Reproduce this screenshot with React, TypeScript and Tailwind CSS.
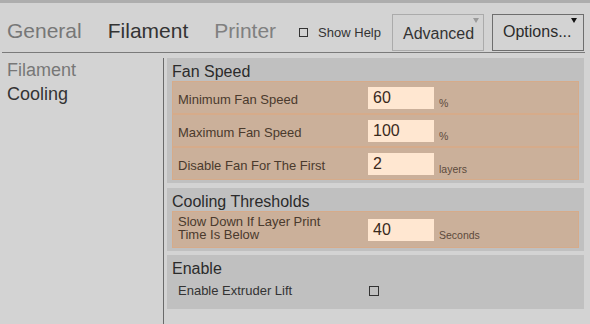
const font = { fontFamily: '"Liberation Sans", Arial, sans-serif' };

type Field = { label: string; value: string; unit: string; tall?: boolean };

function FieldRow({ label, value, unit, tall }: Field) {
  return (
    <div
      className={`flex items-center border border-[#d6ab8a] bg-[#cbb09a] px-[5px] ${
        tall ? "h-[37px]" : "h-[33px]"
      }`}
    >
      <div className="w-[190px] shrink-0">
        <div
          className={`text-[13px] text-[#4a3a2d] ${
            tall ? "max-w-[165px] pb-[3px] leading-[13px]" : "pt-[3px] leading-[15px]"
          }`}
        >
          {label}
        </div>
      </div>
      <div className="flex items-end">
        <div className="flex h-[22px] w-[66px] items-center bg-[#ffe7d1] pl-[5px] text-[16px] text-[#3a2a1c]">
          {value}
        </div>
        <span className="ml-[5px] text-[10.5px] leading-[12px] text-[#5c4a3c]">{unit}</span>
      </div>
    </div>
  );
}

function Section({ title, children }: { title: string; children: React.ReactNode }) {
  return (
    <div className="bg-[#c0c0c0] pt-[4px] pb-[3px]">
      <div className="pl-[5px] text-[16px] leading-[19px] text-[#2b2b2b]">{title}</div>
      <div className="mx-[5px]">{children}</div>
    </div>
  );
}

export default function App() {
  return (
    <div style={font} className="relative h-[324px] w-[590px] overflow-hidden bg-[#d3d3d3]">
      <div className="h-[3px] bg-[#adadad]" />

      {/* Header tabs */}
      <div className="ml-[2px] mr-[5px] flex h-[50px] items-end whitespace-nowrap border-b border-[#7a7a7a] pb-[1px]">
        <div className="mb-[9px] flex shrink-0 gap-[26px] pl-[5px] text-[21px] leading-[22px]">
          <span className="text-[#777777]">General</span>
          <span className="text-[#333333]">Filament</span>
          <span className="text-[#808080]">Printer</span>
        </div>
        <div className="ml-[23px] flex h-[37px] shrink-0 items-center">
          <div className="h-[9px] w-[9px] border border-[#333]" />
          <span className="ml-[10px] text-[13px] text-[#333]">Show Help</span>
        </div>
        <div className="relative ml-[11px] flex h-[37px] w-[92px] shrink-0 items-center border border-[#ababab] pl-[10px] pt-[2px] text-[16px] text-[#333]">
          Advanced
          <div className="absolute right-[4px] top-[3px] h-0 w-0 border-x-[3.5px] border-t-[5px] border-x-transparent border-t-[#9a9a9a]" />
        </div>
        <div className="relative ml-[8px] flex h-[37px] w-[92px] shrink-0 items-center border border-[#6e6e6e] pb-[2px] pl-[10px] text-[16px] text-[#2b2b2b]">
          Options...
          <div className="absolute right-[6px] top-[3px] h-0 w-0 border-x-[3.5px] border-t-[5px] border-x-transparent border-t-[#111]" />
        </div>
      </div>

      {/* Body */}
      <div className="mt-[5px] flex h-[266px]">
        <div className="w-[164px] shrink-0 border-r border-[#6a6a6a] pl-[7px] text-[18px] leading-[24px]">
          <div className="text-[#777777]">Filament</div>
          <div className="text-[#333333]">Cooling</div>
        </div>
        <div className="flex flex-1 flex-col gap-[4px] pl-[3px] pr-[6px]">
          <Section title="Fan Speed">
            <FieldRow label="Minimum Fan Speed" value="60" unit="%" />
            <FieldRow label="Maximum Fan Speed" value="100" unit="%" />
            <FieldRow label="Disable Fan For The First" value="2" unit="layers" />
          </Section>
          <div className="mt-[1px]">
            <Section title="Cooling Thresholds">
              <FieldRow label="Slow Down If Layer Print Time Is Below" value="40" unit="Seconds" tall />
            </Section>
          </div>
          <Section title="Enable">
            <div className="flex h-[28px] items-center pb-[3px] pl-[6px]">
              <span className="w-[191px] shrink-0 text-[13px] text-[#333]">Enable Extruder Lift</span>
              <div className="h-[10px] w-[10px] border-[1.3px] border-[#333]" />
            </div>
          </Section>
        </div>
      </div>
    </div>
  );
}
